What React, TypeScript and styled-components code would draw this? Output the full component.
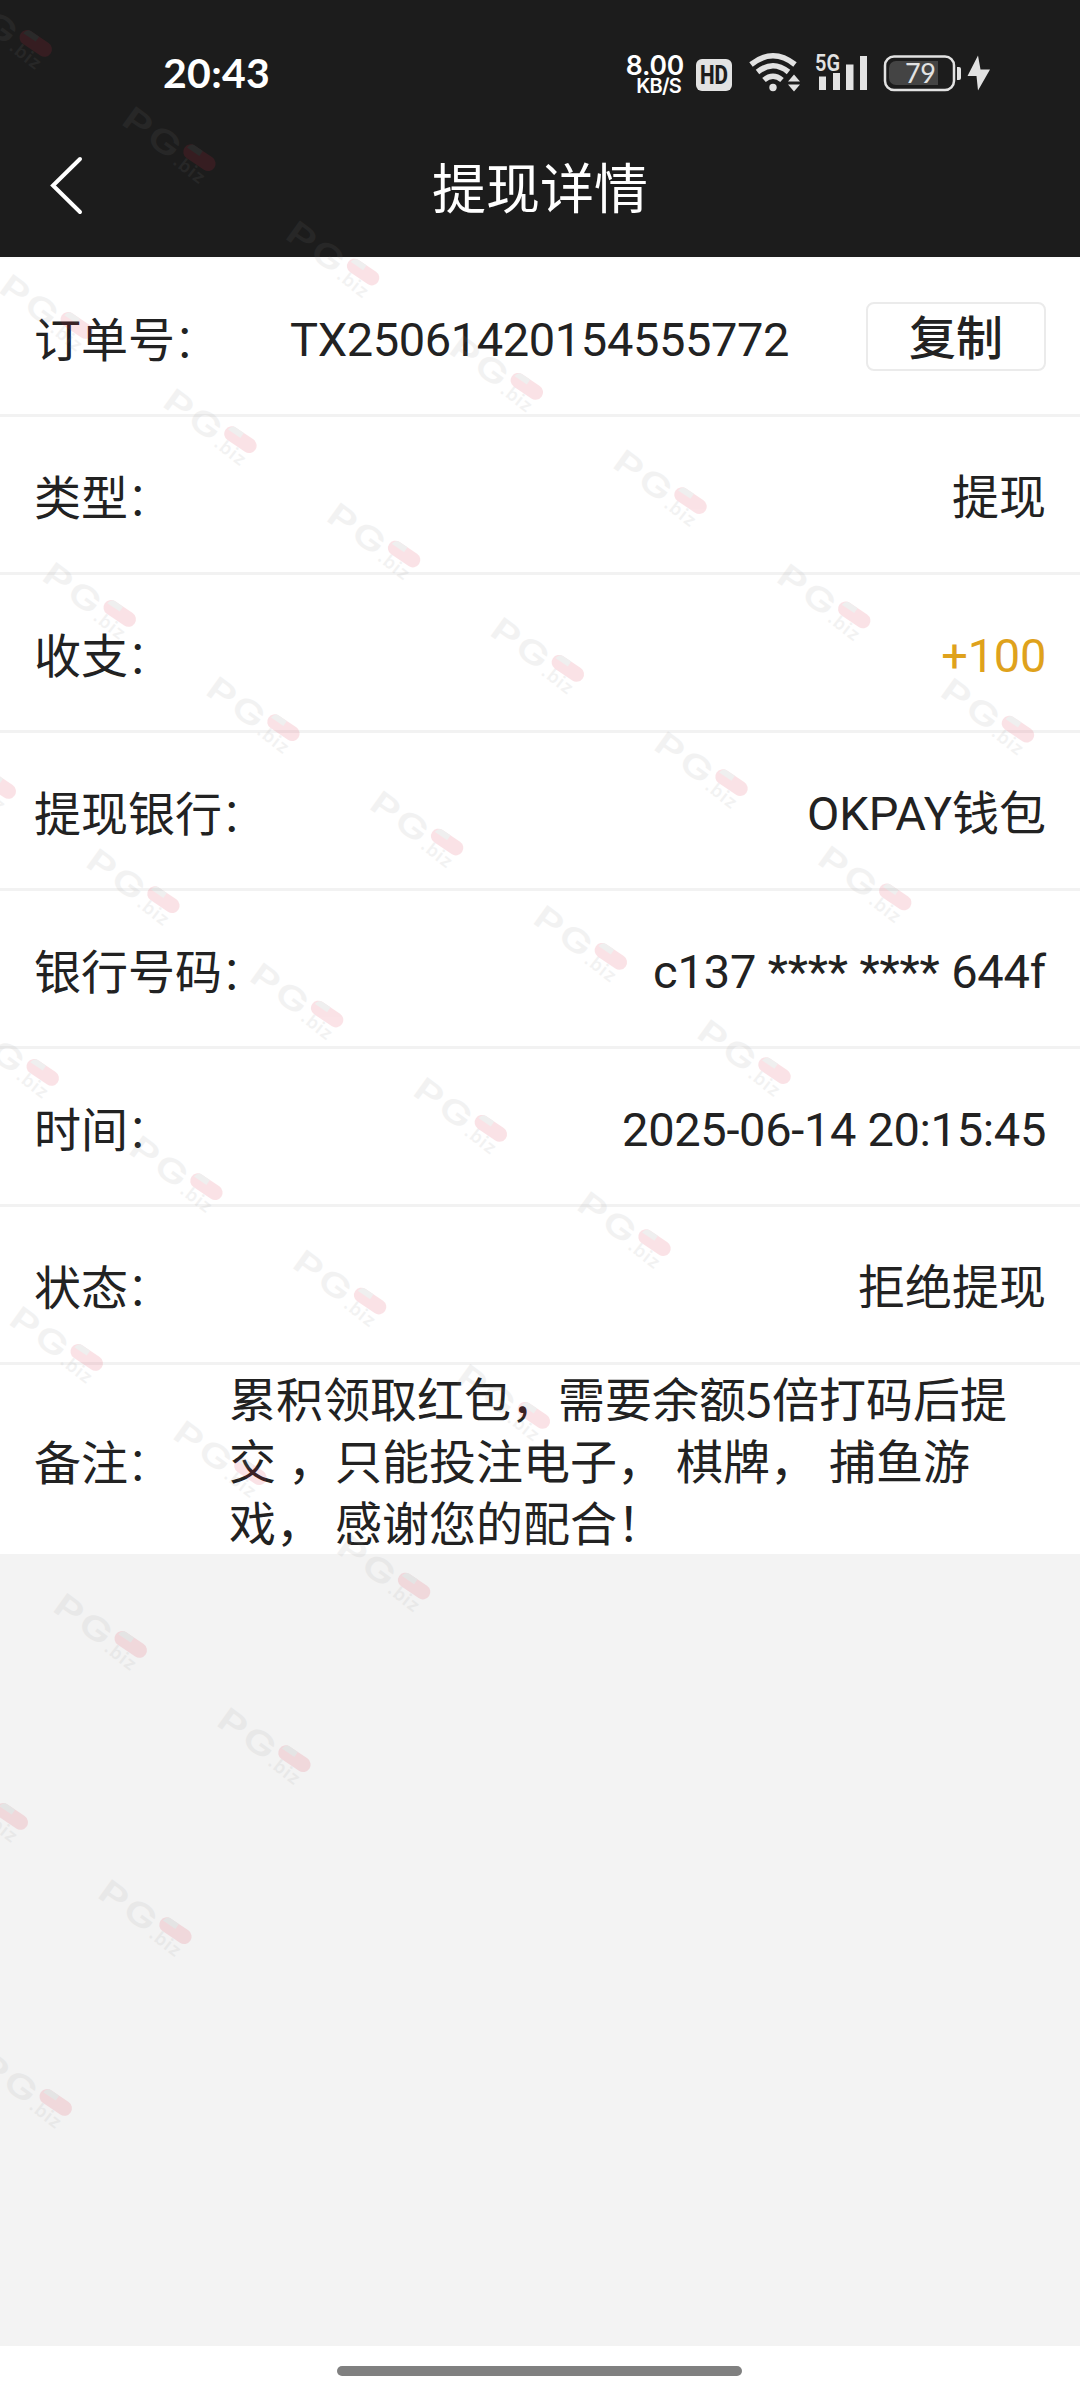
import React from "react";
import styled, { createGlobalStyle } from "styled-components";

const cjk = `"Noto Sans CJK SC", sans-serif`;

const Global = createGlobalStyle`
  * { box-sizing: border-box; }
  body { margin: 0; background: #f3f3f3; }
`;

const Screen = styled.div`
  position: relative;
  width: 1080px;
  height: 2400px;
  display: flex;
  flex-direction: column;
  overflow: hidden;
  background: #f3f3f3;
  color: #222;
  font-family: Roboto, ${cjk};
`;

const Header = styled.header`
  height: 257px;
  background: #1c1c1c;
  color: #fff;
  display: flex;
  flex-direction: column;
`;

const StatusBar = styled.div`
  height: 120px;
  padding: 26px 87px 0 163px;
  display: flex;
  align-items: center;
  justify-content: space-between;
`;

const Clock = styled.span`
  font: 700 41px/50px Lato, ${cjk};
  letter-spacing: 0.3px;
`;

const StatusIcons = styled.div`
  display: flex;
  align-items: center;
  padding-top: 3px;
`;

const Speed = styled.div`
  width: 64px;
  height: 50px;
  padding: 4px 3px 0 0;
  display: flex;
  flex-direction: column;
  align-items: flex-end;
  font-family: Inter, sans-serif;
  font-weight: 600;
`;

const SpeedValue = styled.span`
  font-size: 26.5px;
  line-height: 22px;
  letter-spacing: -0.2px;
`;

const SpeedUnit = styled.span`
  padding-right: 3px;
  font-size: 20px;
  line-height: 20px;
  letter-spacing: -0.8px;
`;

const NavBar = styled.div`
  height: 137px;
  display: grid;
  grid-template-columns: 130px 1fr 130px;
  align-items: center;
`;

const BackIcon = styled.svg`
  margin: -7px 0 0 46px;
`;

const Title = styled.h1`
  margin: 0;
  padding-top: 4px;
  text-align: center;
  font: 400 54px/70px Roboto, ${cjk};
`;

const List = styled.main`
  background: #fff;
  border-top: 2px solid #fcfcfc;
`;

const Row = styled.section<{ $tall?: boolean }>`
  height: ${(p) => (p.$tall ? 189 : 158)}px;
  padding: 0 34px;
  display: flex;
  align-items: center;
  border-bottom: ${(p) => (p.$tall ? 0 : 3)}px solid #f2f2f2;
`;

const Label = styled.span`
  padding-top: 8px;
  font-size: 47px;
  line-height: 62px;
  white-space: nowrap;
`;

const Colon = styled.span`
  margin-left: -2px;
  font-weight: 300;
`;

const Value = styled.span<{ $color?: string; $tracking?: number }>`
  margin-left: auto;
  padding-top: 6px;
  font-size: 47px;
  line-height: 62px;
  white-space: nowrap;
  letter-spacing: ${(p) => p.$tracking ?? 0}px;
  color: ${(p) => p.$color ?? "inherit"};
`;

const CopyButton = styled.button`
  width: 180px;
  height: 69px;
  margin-left: 77px;
  padding: 5px 0 0;
  border: 2px solid #ebebeb;
  border-radius: 8px;
  background: #fff;
  color: #222;
  font: 500 47px/60px Roboto, ${cjk};
`;

const Remark = styled.p`
  margin: 0 0 1px 56px;
  font: 400 47px/62px ${cjk};
  word-spacing: 1.5px;
  white-space: pre;
`;

const HomeArea = styled.footer`
  height: 54px;
  margin-top: auto;
  background: #fff;
  display: flex;
  justify-content: center;
  padding: 20px 2px 0 0;
`;

const HomeBar = styled.div`
  width: 405px;
  height: 10px;
  border-radius: 5px;
  background: #808080;
`;

const WatermarkLayer = styled.svg`
  position: absolute;
  inset: 0;
  pointer-events: none;
`;

const ui = "#e2e2e2";

function Indicators() {
  return (
    <StatusIcons>
      <Speed>
        <SpeedValue>8.00</SpeedValue>
        <SpeedUnit>KB/S</SpeedUnit>
      </Speed>
      <svg width="306" height="50" viewBox="64 0 306 50">
        <rect x="73" y="9" width="36" height="32" rx="6" fill={ui} />
        <text x="77" y="33.500" fontFamily="Roboto, sans-serif" fontSize="25" fontWeight="800" textLength="28" lengthAdjust="spacingAndGlyphs" fill="#1c1c1c">HD</text>
        <g fill="none" stroke={ui} strokeWidth="5.5">
          <path d="M128 14.500Q150 -3 172 14.500" />
          <path d="M134.500 22Q150 9.500 165.500 22" />
          <path d="M141 30Q150 22.500 159 30" />
        </g>
        <circle cx="150" cy="37.500" r="3.700" fill={ui} />
        <path d="M165 31.500l6-7 6 7zM165 34.500l6 7 6-7z" fill={ui} />
        <text x="192" y="20.500" fontFamily="Roboto, sans-serif" fontSize="23.500" fontWeight="600" textLength="25" lengthAdjust="spacingAndGlyphs" fill={ui}>5G</text>
        <path d="M196 26.500h7v13.500h-7zM210 23h7v17h-7zM223 14.500h7.500v25.500h-7.500zM237 6h7v34h-7z" fill={ui} />
        <rect x="262" y="6.500" width="69" height="33.500" rx="9" fill="none" stroke={ui} strokeWidth="2.500" />
        <path d="M273 11h42v24h-42a7 7 0 0 1-7-7v-10a7 7 0 0 1 7-7z" fill="#444" />
        <text x="282" y="33" fontFamily="Lato, sans-serif" fontSize="27" fill={ui} textLength="31">79</text>
        <path d="M334 17h2q2 0 2 2v9q0 2-2 2h-2z" fill={ui} />
        <path d="M355 5.500l-10.500 20.500h9l1.500 14.500 12-21h-9.500z" fill={ui} />
      </svg>
    </StatusIcons>
  );
}

// Diagonal lattice: each line lists its first mark and how many marks it holds.
const lines: [number, number, number][] = [
  [-41, -7, 7],
  [0, 275, 6],
  [43, 563, 5],
  [-77, 735, 5],
  [-34, 1022, 4],
  [10, 1307, 3],
  [54, 1594, 2],
  [-65, 1766, 2],
  [-21, 2052, 1],
];

function Watermarks() {
  return (
    <WatermarkLayer width="1080" height="2400">
      {lines.flatMap(([x, y, n]) =>
        Array.from({ length: n }, (_, i) => (
          <g key={`${x}-${i}`} transform={`translate(${x + i * 163.7} ${y + i * 114.3})`}>
            <g fontFamily="Inter, sans-serif" fill="#8c8c8c" opacity="0.1">
              <text transform="translate(-3 16) rotate(36) scale(1.38 1)" fontSize="32" fontWeight="600" letterSpacing="1.5">PG</text>
              <text transform="translate(49 56) rotate(38)" fontSize="18" fontWeight="600" letterSpacing="1">.biz</text>
            </g>
            <g transform="rotate(34 77 50)" opacity="0.13">
              <rect x="59" y="43" width="36" height="15" rx="7.500" fill="#e02845" />
              <path d="M66 43h10v6h-15q1-6 5-6z" fill="#888" />
            </g>
          </g>
        ))
      )}
    </WatermarkLayer>
  );
}

function Field({ name }: { name: string }) {
  return (
    <Label>
      {name}
      <Colon>：</Colon>
    </Label>
  );
}

export default function App() {
  return (
    <Screen>
      <Global />
      <Header>
        <StatusBar>
          <Clock>20:43</Clock>
          <Indicators />
        </StatusBar>
        <NavBar>
          <BackIcon width="40" height="60" viewBox="0 0 40 60">
            <path d="M34 4L7 30.500L34 57" fill="none" stroke="#fff" strokeWidth="4" strokeLinecap="round" />
          </BackIcon>
          <Title>提现详情</Title>
        </NavBar>
      </Header>
      <List>
        <Row>
          <Field name="订单号" />
          <Value $tracking={-0.4}>TX25061420154555772</Value>
          <CopyButton>复制</CopyButton>
        </Row>
        <Row><Field name="类型" /><Value>提现</Value></Row>
        <Row><Field name="收支" /><Value $color="#dfa21c" $tracking={-0.3}>+100</Value></Row>
        <Row><Field name="提现银行" /><Value>OKPAY钱包</Value></Row>
        <Row><Field name="银行号码" /><Value $tracking={-0.18}>c137 **** **** 644f</Value></Row>
        <Row><Field name="时间" /><Value $tracking={-0.33}>2025-06-14 20:15:45</Value></Row>
        <Row><Field name="状态" /><Value>拒绝提现</Value></Row>
        <Row $tall>
          <Field name="备注" />
          <Remark>{"累积领取红包，需要余额5倍打码后提\n交 ，只能投注电子， 棋牌， 捕鱼游\n戏， 感谢您的配合！"}</Remark>
        </Row>
      </List>
      <HomeArea><HomeBar /></HomeArea>
      <Watermarks />
    </Screen>
  );
}
